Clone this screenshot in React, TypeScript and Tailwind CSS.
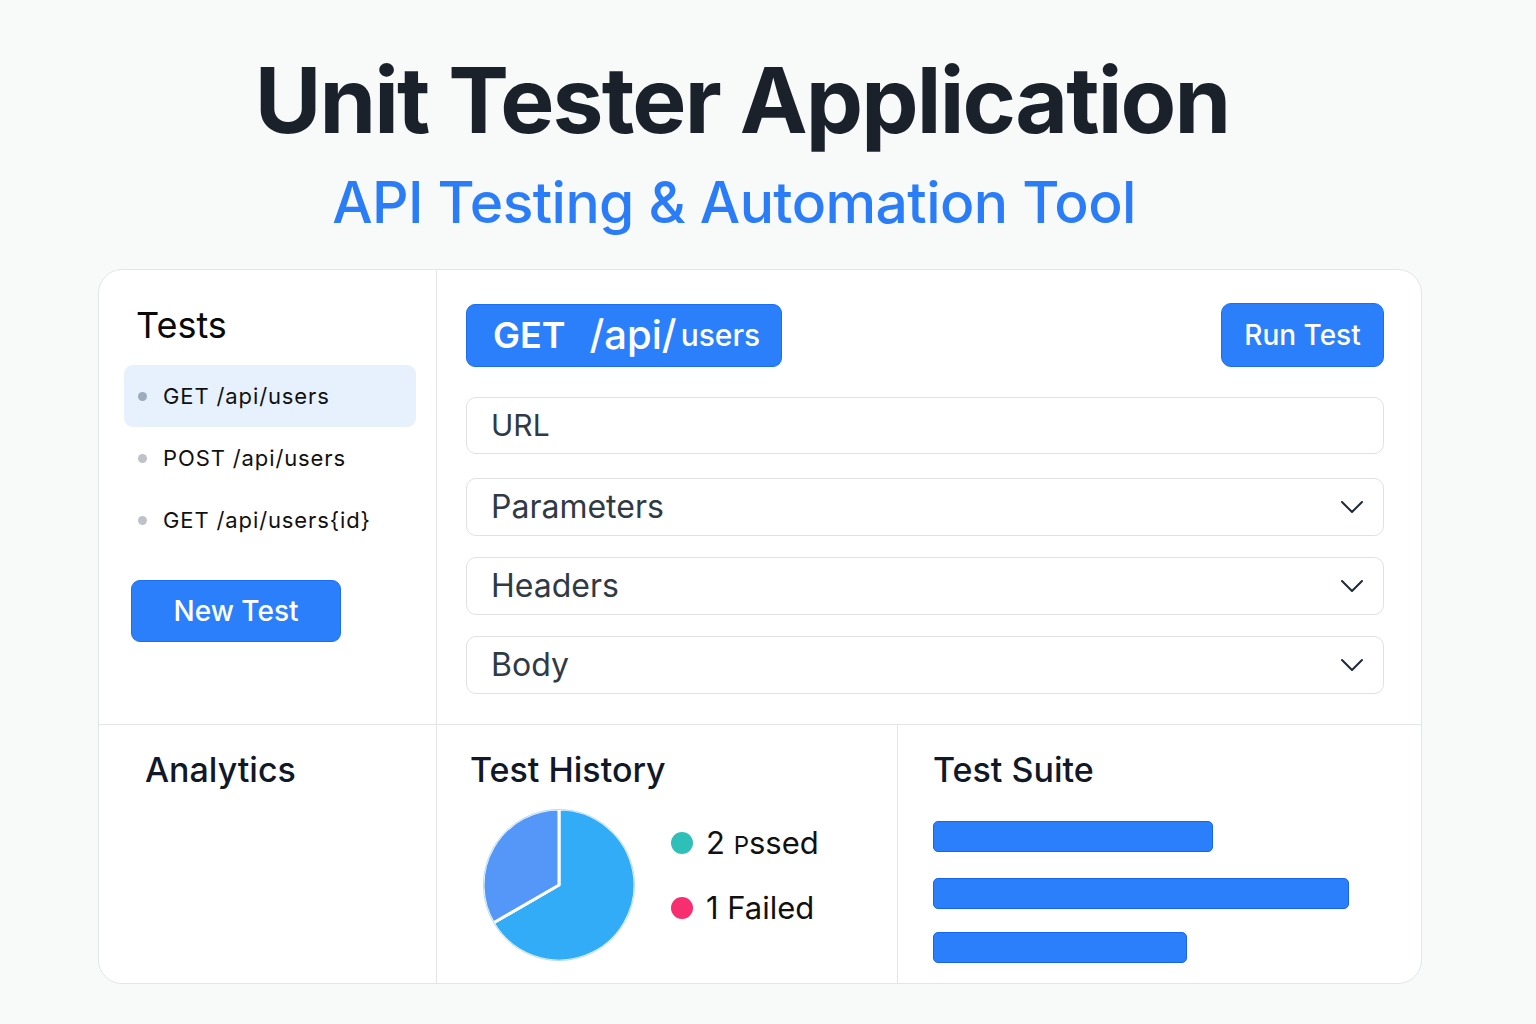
import React from 'react';
import { ChevronDown } from 'lucide-react';

interface TestItem {
    method: string;
    path: string;
    active?: boolean;
}

const tests: TestItem[] = [
    { method: "GET", path: "/api/users", active: true },
    { method: "POST", path: "/api/users" },
    { method: "GET", path: "/api/users{id}" },
];

const sections = ["Parameters", "Headers", "Body"];

const suiteBars = [280, 416, 254];

const PieChart: React.FC = () => (
    <svg width="152" height="152" viewBox="0 0 152 152">
        <path d="M76 76 L10.2 114 A76 76 0 1 0 76 0 Z" fill="#33acf7" stroke="#fff" strokeWidth="3" strokeLinejoin="round" />
        <path d="M76 76 L76 0 A76 76 0 0 0 10.2 114 Z" fill="#5597f9" stroke="#fff" strokeWidth="3" strokeLinejoin="round" />
        <circle cx="76" cy="76" r="75.5" fill="none" stroke="#2a97ef" strokeOpacity="0.35" strokeWidth="1" />
    </svg>
);

const App: React.FC = () => {
    return (
        <div className="min-h-screen bg-[#f8f9f9] font-['Inter','Liberation_Sans',sans-serif] pb-[40px]">
            {/* Header */}
            <div className="w-[1324px] ml-[98px] pt-[55px] text-center">
                <h1 className="text-[91px] leading-none font-bold tracking-[-0.02em] text-[#1b212b] pr-[36px]">
                    Unit Tester Application
                </h1>
                <p className="mt-[28px] text-[57px] leading-none font-medium tracking-[-0.01em] text-[#2b7cf7] pr-[52px]">
                    API Testing &amp; Automation Tool
                </p>
            </div>

            {/* Main card */}
            <div className="w-[1324px] ml-[98px] mt-[38px] bg-white rounded-[24px] border border-[#e3e5e8] overflow-hidden">
                <div className="grid grid-cols-[338px_1fr] border-b border-[#e3e5e8]">
                    {/* Tests sidebar */}
                    <div className="border-r border-[#e3e5e8] pl-[25px] pr-[20px] pt-[33px]">
                        <h2 className="ml-[12px] text-[36px] leading-[44px] text-[#0a0a0a]">Tests</h2>
                        <ul className="mt-[18px]">
                            {tests.map((t, i) => (
                                <li
                                    key={i}
                                    className={`h-[62px] flex items-center pl-[14px] rounded-[9px] ${t.active ? 'bg-[#e7f1fd]' : ''}`}
                                >
                                    <span className={`w-[9px] h-[9px] rounded-full ${t.active ? 'bg-[#9eabbc]' : 'bg-[#c0c2c7]'}`} />
                                    <span className="ml-[16px] text-[22px] tracking-[0.04em] text-[#111]">
                                        {t.method}&nbsp;{t.path}
                                    </span>
                                </li>
                            ))}
                        </ul>
                        <button className="mt-[29px] ml-[7px] w-[210px] h-[62px] rounded-[9px] bg-[#2b7ffa] border border-[#1c6ef0] text-white text-[28px] font-medium">
                            New Test
                        </button>
                    </div>

                    {/* Request editor */}
                    <div className="pl-[29px] pr-[37px] pt-[33px] pb-[30px]">
                        <div className="flex items-center justify-between h-[64px]">
                            <div className="h-[63px] w-[316px] rounded-[9px] bg-[#2b7ffa] border border-[#1c6ef0] flex items-center pl-[26px] text-white">
                                <span className="text-[36px] font-semibold">GET</span>
                                <span className="ml-[24px] text-[40px] font-medium">/api/</span>
                                <span className="ml-[4px] text-[30px] font-medium">users</span>
                            </div>
                            <button className="h-[64px] w-[163px] rounded-[10px] bg-[#2b7ffa] border border-[#1c6ef0] text-white text-[28px] font-medium">
                                Run Test
                            </button>
                        </div>

                        <div className="mt-[30px] h-[57px] rounded-[10px] border border-[#dfe1e4] flex items-center px-[24px] text-[30px] text-[#2f3a45]">
                            URL
                        </div>

                        {sections.map((s, i) => (
                            <div
                                key={s}
                                className={`${i === 0 ? 'mt-[24px]' : 'mt-[21px]'} h-[58px] rounded-[10px] border border-[#dfe1e4] flex items-center justify-between pl-[24px] pr-[11px] text-[32px] text-[#2f3a45]`}
                            >
                                <span>{s}</span>
                                <ChevronDown size={40} strokeWidth={1.2} className="text-[#1f2937]" />
                            </div>
                        ))}
                    </div>
                </div>

                {/* Bottom row */}
                <div className="grid grid-cols-[338px_461px_1fr] h-[258px]">
                    <div className="border-r border-[#e3e5e8] pl-[46px] pt-[25px]">
                        <h3 className="text-[34px] leading-[40px] font-medium text-[#111827]">Analytics</h3>
                    </div>

                    <div className="border-r border-[#e3e5e8] pl-[33px] pt-[25px]">
                        <h3 className="text-[34px] leading-[40px] font-medium text-[#111827]">Test History</h3>
                        <div className="mt-[19px] ml-[13px] flex items-start">
                            <PieChart />
                            <div className="ml-[36px] mt-[14px] flex flex-col gap-[25px]">
                                <div className="h-[40px] flex items-center">
                                    <span className="w-[22px] h-[22px] rounded-full bg-[#2fbfb9]" />
                                    <span className="ml-[13px] text-[31px] text-[#111]">
                                        2 <span className="text-[24px]">P</span>ssed
                                    </span>
                                </div>
                                <div className="h-[40px] flex items-center">
                                    <span className="w-[22px] h-[22px] rounded-full bg-[#f72f70]" />
                                    <span className="ml-[13px] text-[31px] text-[#111]">1 Failed</span>
                                </div>
                            </div>
                        </div>
                    </div>

                    <div className="pl-[35px] pt-[25px]">
                        <h3 className="text-[34px] leading-[40px] font-medium text-[#111827]">Test Suite</h3>
                        <div className="mt-[31px] flex flex-col">
                            {suiteBars.map((w, i) => (
                                <div
                                    key={i}
                                    className={`${i === 1 ? 'mt-[26px]' : i === 2 ? 'mt-[23px]' : ''} h-[31px] rounded-[5px] bg-[#2b7ffb] border border-[#1466f0]`}
                                    style={{ width: w }}
                                />
                            ))}
                        </div>
                    </div>
                </div>
            </div>
        </div>
    );
};

export default App;
